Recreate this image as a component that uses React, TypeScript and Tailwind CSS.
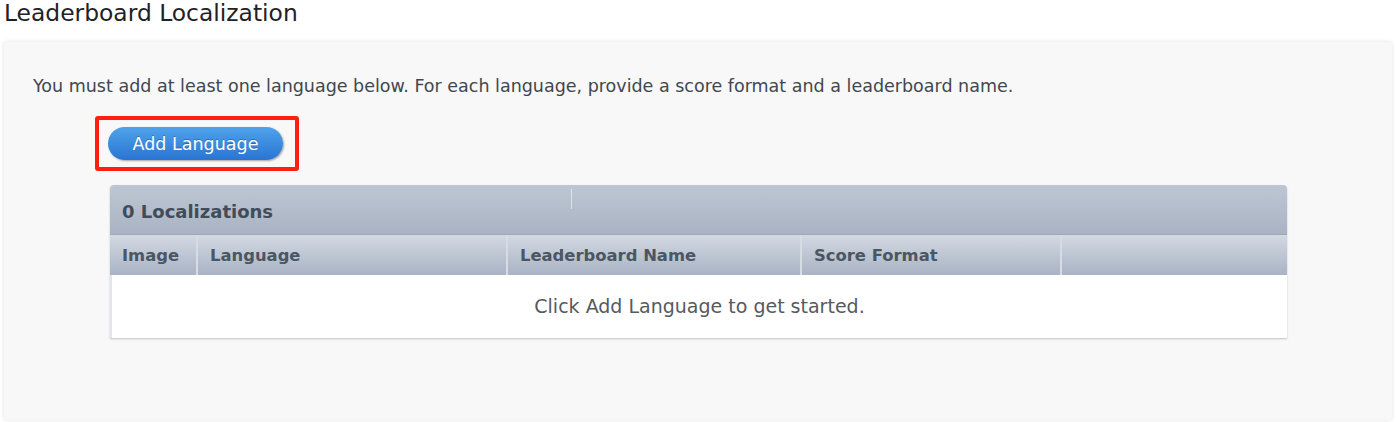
export default function App() {
  const cols = [
    { label: "Image", w: "w-[88px]" },
    { label: "Language", w: "w-[310px]" },
    { label: "Leaderboard Name", w: "w-[294px]" },
    { label: "Score Format", w: "w-[260px]" },
    { label: "", w: "flex-1" },
  ];

  return (
    <div className="h-[422px] w-[1396px] bg-white font-['DejaVu_Sans',sans-serif] overflow-hidden">
      {/* Title */}
      <h1 className="pl-[4px] text-[23.4px] leading-[27px] text-[#1e2227]">Leaderboard Localization</h1>

      {/* Panel */}
      <div className="mx-[4px] mt-[15px] h-[378px] rounded-[3px] bg-[#f8f8f8] shadow-[0_0_4px_rgba(0,0,0,0.12)] pt-[33px]">
        <p className="pl-[29px] text-[17.5px] leading-[22px] text-[#41474f]">
          You must add at least one language below. For each language, provide a score format and a leaderboard name.
        </p>

        <div className="ml-[91px] mt-[19px] inline-flex rounded-[3px] border-[4px] border-[#ff1f0f] p-[7px_12px_7px_9px]">
          <button className="h-[33px] w-[175px] rounded-full bg-gradient-to-b from-[#4fa3ea] to-[#2a74d2] text-[17.5px] leading-[20px] text-white shadow-[1px_1px_2px_rgba(0,0,0,0.35)] [text-shadow:0_-1px_0_rgba(0,0,0,0.25)]">
            Add Language
          </button>
        </div>

        {/* Table */}
        <div className="ml-[106px] mt-[14px] w-[1177px] rounded-t-[4px] shadow-[0_1px_2px_rgba(120,130,150,0.45)] overflow-hidden">
          <div className="relative flex h-[50px] items-center bg-gradient-to-b from-[#bdc6d2] to-[#aab3c4] pl-[12px] pt-[3px] border-b border-[#9ea8b8]">
            <span className="text-[18px] font-bold text-[#414c58]">0 Localizations</span>
            <span className="absolute left-[461px] top-[4px] h-[20px] w-px bg-[#dde2e9]" />
          </div>
          <div className="flex h-[40px] bg-gradient-to-b from-[#d2d9e2] to-[#aab3c4]">
            {cols.map((c, i) => (
              <div
                key={i}
                className={`${c.w} flex items-center pl-[12px] pt-[2px] text-[16.4px] font-bold text-[#4b5663] ${i < cols.length - 1 ? "border-r-2 border-[#d6dce4]" : ""}`}
              >
                {c.label}
              </div>
            ))}
          </div>
          <div className="flex h-[63px] items-center justify-center bg-white border-l-2 border-[#e2e5ea] text-[19px] text-[#555a60]">
            Click Add Language to get started.
          </div>
        </div>
      </div>
    </div>
  );
}
